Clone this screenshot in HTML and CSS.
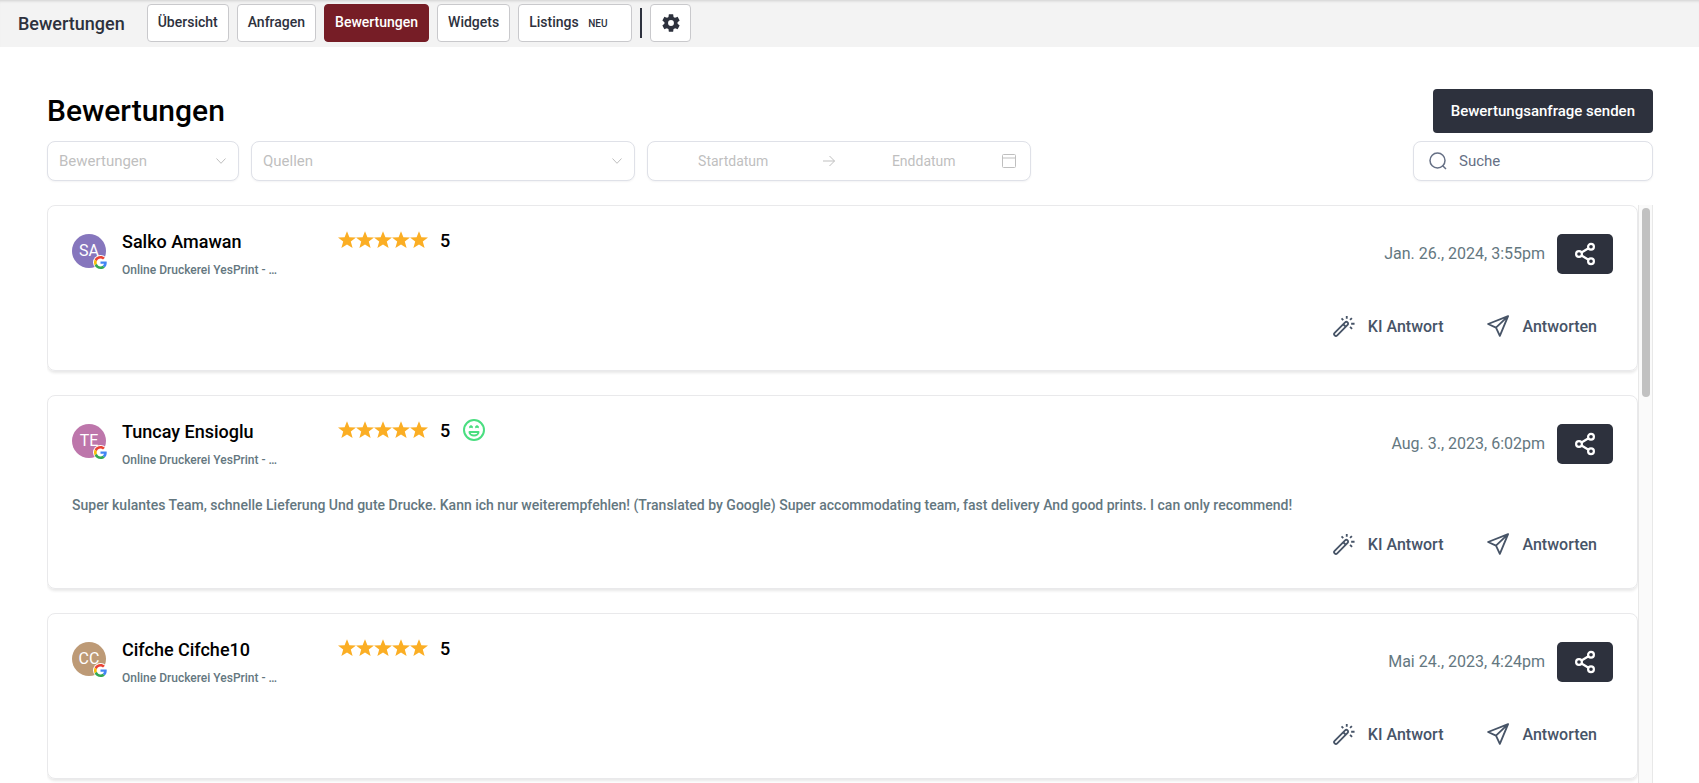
FILE: index.html
```html
<!DOCTYPE html>
<html lang="de">
<head>
<meta charset="utf-8">
<title>Bewertungen</title>
<link rel="stylesheet" href="styles.css">
</head>
<body>
<svg class="sprite" aria-hidden="true">
  <symbol id="star" viewBox="0 0 18 18"><path fill="#fbae24" d="M9 .2l2.400 6 6.600.3-5.200 4.100 1.800 6.400L9 13.500l-5.600 3.500 1.800-6.400L0 6.500l6.600-.3z"/></symbol>
  <symbol id="google" viewBox="0 0 48 48"><path fill="#EA4335" d="M24 9.5c3.54 0 6.71 1.22 9.21 3.6l6.85-6.85C35.9 2.38 30.47 0 24 0 14.62 0 6.51 5.38 2.56 13.22l7.98 6.19C12.43 13.72 17.74 9.5 24 9.5z"/><path fill="#4285F4" d="M46.98 24.55c0-1.57-.15-3.09-.38-4.55H24v9.02h12.94c-.58 2.96-2.26 5.48-4.78 7.18l7.73 6c4.51-4.18 7.09-10.36 7.09-17.65z"/><path fill="#FBBC05" d="M10.53 28.59c-.48-1.45-.76-2.99-.76-4.59s.27-3.14.76-4.59l-7.98-6.19C.92 16.46 0 20.12 0 24c0 3.88.92 7.54 2.56 10.78l7.97-6.19z"/><path fill="#34A853" d="M24 48c6.48 0 11.93-2.13 15.89-5.81l-7.73-6c-2.15 1.45-4.92 2.3-8.16 2.3-6.26 0-11.57-4.22-13.47-9.91l-7.98 6.19C6.51 42.62 14.62 48 24 48z"/></symbol>
  <symbol id="share" viewBox="0 0 24 24"><g fill="none" stroke="currentColor" stroke-width="2.200"><circle cx="18" cy="4.800" r="2.900"/><circle cx="6" cy="12" r="2.900"/><circle cx="18" cy="19.200" r="2.900"/><path d="M8.500 10.500l7-4.200M8.500 13.500l7 4.200"/></g></symbol>
  <symbol id="wand" viewBox="0 0 24 24"><g fill="none" stroke="currentColor" stroke-width="2"><path stroke-linejoin="round" d="M1.800 19.400L13.200 8.100a1.800 1.800 0 0 1 2.700 2.700L4.600 22.200a1.900 1.900 0 0 1-2.800-2.800zM11.200 10.100l2.700 2.700"/><path d="M15 1v3.200M9.300 3.600l1.900 1.900M20.600 3.400l-2 2M19.800 9.500H23.500M18.600 13l2.200 2.200"/></g></symbol>
  <symbol id="plane" viewBox="0 0 24 24"><path fill="none" stroke="currentColor" stroke-width="2" stroke-linejoin="round" d="M23 1.200L1.200 9.800 9.800 13.800 14 22.800zM23 1.200L9.800 13.800"/></symbol>
  <symbol id="chevron" viewBox="0 0 12 12"><path fill="none" stroke="currentColor" d="M1.500 3.500L6 8.300l4.500-4.800"/></symbol>
</svg>

<header class="topbar">
  <span class="topbar-title">Bewertungen</span>
  <nav class="tabs">
    <button class="tab">Übersicht</button>
    <button class="tab">Anfragen</button>
    <button class="tab tab-active">Bewertungen</button>
    <button class="tab">Widgets</button>
    <button class="tab tab-new">Listings <small class="tag">NEU</small></button>
    <span class="divider"></span>
    <button class="tab tab-gear" aria-label="Einstellungen"><svg width="22" height="22" viewBox="0 0 24 24"><path fill="currentColor" d="M19.140 12.940c.040-.300.060-.610.060-.940 0-.320-.020-.640-.070-.940l2.030-1.580c.180-.140.230-.410.120-.610l-1.920-3.320c-.120-.220-.370-.290-.590-.220l-2.390.960c-.500-.380-1.030-.700-1.620-.940l-.360-2.540c-.040-.240-.240-.410-.480-.410h-3.840c-.240 0-.430.170-.470.410l-.360 2.540c-.590.240-1.130.570-1.620.940l-2.390-.960c-.220-.080-.470 0-.590.220L2.740 8.870c-.120.210-.080.470.120.610l2.030 1.580c-.050.300-.090.630-.090.940s.020.640.070.940l-2.030 1.580c-.180.140-.230.410-.120.610l1.920 3.320c.120.220.370.290.590.220l2.390-.960c.500.380 1.030.700 1.620.940l.360 2.540c.050.240.240.410.480.410h3.840c.240 0 .440-.170.470-.410l.360-2.540c.590-.240 1.130-.560 1.620-.940l2.390.960c.220.080.470 0 .590-.220l1.920-3.320c.120-.220.070-.470-.120-.610l-2.010-1.580zM12 15.200a3.200 3.200 0 1 1 0-6.400 3.200 3.200 0 0 1 0 6.400z"/></svg></button>
  </nav>
</header>

<main class="page">
  <div class="page-head">
    <h1 class="page-title">Bewertungen</h1>
    <button class="send">Bewertungsanfrage senden</button>
  </div>
  <div class="filters">
    <div class="field field-rating">
      <select class="select" aria-label="Bewertungen"><option>Bewertungen</option></select>
      <svg class="caret" width="12" height="12"><use href="#chevron"/></svg>
    </div>
    <div class="field field-source">
      <select class="select" aria-label="Quellen"><option>Quellen</option></select>
      <svg class="caret" width="12" height="12"><use href="#chevron"/></svg>
    </div>
    <div class="field field-dates">
      <input class="date" type="text" placeholder="Startdatum" aria-label="Startdatum">
      <svg class="arrow" width="14" height="14" viewBox="0 0 14 14"><path fill="none" stroke="currentColor" d="M1 7h11.500M7.500 2l5 5-5 5"/></svg>
      <input class="date" type="text" placeholder="Enddatum" aria-label="Enddatum">
      <svg class="calendar" width="14" height="14" viewBox="0 0 14 14"><path fill="none" stroke="currentColor" d="M1.500.5h11a1 1 0 0 1 1 1v11a1 1 0 0 1-1 1h-11a1 1 0 0 1-1-1v-11a1 1 0 0 1 1-1zM.5 4h13"/></svg>
    </div>
    <label class="field field-search">
      <svg width="18" height="18" viewBox="0 0 18 18"><g fill="none" stroke="currentColor" stroke-width="1.500"><circle cx="8.500" cy="8.500" r="7.500"/><path d="M13.500 13.500l3.500 3.500"/></g></svg>
      <input class="search" type="text" placeholder="Suche" aria-label="Suche">
    </label>
  </div>

  <div class="list">
    <div class="cards">
      <article class="card">
        <div class="card-head">
          <div class="avatar avatar-violet">SA<span class="source"><svg width="13" height="13"><use href="#google"/></svg></span></div>
          <div class="who"><h2 class="name">Salko Amawan</h2><p class="place">Online Druckerei YesPrint - …</p></div>
          <div class="rating"><span class="stars"><svg><use href="#star"/></svg><svg><use href="#star"/></svg><svg><use href="#star"/></svg><svg><use href="#star"/></svg><svg><use href="#star"/></svg></span><span>5</span></div>
          <time class="when">Jan. 26., 2024, 3:55pm</time>
          <button class="share" aria-label="Teilen"><svg width="24" height="24"><use href="#share"/></svg></button>
        </div>
        <div class="actions">
          <button class="action"><svg width="22" height="22"><use href="#wand"/></svg>KI Antwort</button>
          <button class="action"><svg width="22" height="22"><use href="#plane"/></svg>Antworten</button>
        </div>
      </article>

      <article class="card">
        <div class="card-head">
          <div class="avatar avatar-pink">TE<span class="source"><svg width="13" height="13"><use href="#google"/></svg></span></div>
          <div class="who"><h2 class="name">Tuncay Ensioglu</h2><p class="place">Online Druckerei YesPrint - …</p></div>
          <div class="rating"><span class="stars"><svg><use href="#star"/></svg><svg><use href="#star"/></svg><svg><use href="#star"/></svg><svg><use href="#star"/></svg><svg><use href="#star"/></svg></span><span>5</span>
            <svg class="smiley" width="24" height="24" viewBox="0 0 24 24"><g fill="none" stroke="#4ade80" stroke-width="2"><circle cx="12" cy="12" r="10"/><path stroke-linejoin="round" d="M7.500 14h9c0 2-2 3.500-4.500 3.500S7.500 16 7.500 14z"/></g><path fill="#4ade80" d="M7.200 8.300L9 7l1.800 1.300v2L9 9.800l-1.800.5zM13.200 8.300L15 7l1.800 1.300v2L15 9.800l-1.800.5z"/></svg></div>
          <time class="when">Aug. 3., 2023, 6:02pm</time>
          <button class="share" aria-label="Teilen"><svg width="24" height="24"><use href="#share"/></svg></button>
        </div>
        <p class="text">Super kulantes Team, schnelle Lieferung Und gute Drucke. Kann ich nur weiterempfehlen! (Translated by Google) Super accommodating team, fast delivery And good prints. I can only recommend!</p>
        <div class="actions">
          <button class="action"><svg width="22" height="22"><use href="#wand"/></svg>KI Antwort</button>
          <button class="action"><svg width="22" height="22"><use href="#plane"/></svg>Antworten</button>
        </div>
      </article>

      <article class="card">
        <div class="card-head">
          <div class="avatar avatar-tan">CC<span class="source"><svg width="13" height="13"><use href="#google"/></svg></span></div>
          <div class="who"><h2 class="name">Cifche Cifche10</h2><p class="place">Online Druckerei YesPrint - …</p></div>
          <div class="rating"><span class="stars"><svg><use href="#star"/></svg><svg><use href="#star"/></svg><svg><use href="#star"/></svg><svg><use href="#star"/></svg><svg><use href="#star"/></svg></span><span>5</span></div>
          <time class="when">Mai 24., 2023, 4:24pm</time>
          <button class="share" aria-label="Teilen"><svg width="24" height="24"><use href="#share"/></svg></button>
        </div>
        <div class="actions">
          <button class="action"><svg width="22" height="22"><use href="#wand"/></svg>KI Antwort</button>
          <button class="action"><svg width="22" height="22"><use href="#plane"/></svg>Antworten</button>
        </div>
      </article>
    </div>
    <div class="track"><div class="thumb"></div></div>
  </div>
</main>
</body>
</html>
```
FILE: styles.css
```css
* { box-sizing: border-box; margin: 0; }

body {
  display: flex;
  flex-direction: column;
  height: 100vh;
  overflow: hidden;
  background: #fff;
  color: #000;
  font-family: Roboto, "Liberation Sans", sans-serif;
  font-size: 16px;
}

button, input, select { font: inherit; color: inherit; }
button { cursor: pointer; }
svg { display: block; flex: none; }
.sprite { position: absolute; width: 0; height: 0; }

.topbar {
  display: flex;
  align-items: center;
  gap: 22px;
  height: 47px;
  flex: none;
  padding: 0 18px 1px;
  background: #f3f3f3;
  box-shadow: inset 0 3px 3px -2px #d0d0d0;
  color: #2d313d;
}
.topbar-title { font-size: 18px; font-weight: 500; }

.tabs { display: flex; align-items: center; gap: 8px; }
.tab {
  height: 38px;
  padding: 0 10px 2px;
  border: 1px solid #c9c9cc;
  border-radius: 4px;
  background: #fff;
  font-size: 14px;
  font-weight: 500;
}
.tab-active { border-color: #761d26; background: #761d26; color: #fff; }
.tab-new { padding-right: 24px; }
.tag { margin-left: 6px; font-size: 10px; font-weight: 500; }
.divider { width: 2px; height: 30px; background: #2d313d; }
.tab-gear { display: grid; place-items: center; width: 41px; padding: 0; }

.page {
  display: flex;
  flex-direction: column;
  flex: 1;
  min-height: 0;
  padding: 42px 46px 0 47px;
}
.page-head { display: flex; justify-content: space-between; align-items: center; }
.page-title { padding-bottom: 2px; font-size: 30px; font-weight: 500; }
.send {
  height: 44px;
  padding: 0 18px;
  border: 0;
  border-radius: 4px;
  background: #2d313d;
  color: #fff;
  font-size: 15px;
  font-weight: 500;
}

.filters { display: flex; gap: 12px; margin-top: 8px; }
.field {
  position: relative;
  display: flex;
  align-items: center;
  min-width: 0;
  height: 40px;
  border: 1px solid #dfe1e8;
  border-radius: 8px;
  background: #fff;
  box-shadow: 0 1px 2px #1018280d;
  color: #bfbfbf;
}
.field-rating { flex: 0 1 192px; }
.field-source, .field-dates { flex: 0 1 384px; }
.field-dates { padding: 0 14px 0 11px; }
.field-search { flex: 0 1 240px; gap: 12px; margin-left: auto; padding-left: 15px; color: #667085; }
.select {
  width: 100%;
  height: 100%;
  padding: 0 32px 0 11px;
  border: 0;
  background: transparent;
  font-size: 15px;
  appearance: none;
}
.caret { position: absolute; right: 11px; pointer-events: none; }
.date, .search {
  flex: 1;
  min-width: 0;
  padding: 0;
  border: 0;
  outline: 0;
  background: transparent;
}
.date { font-size: 14px; text-align: center; }
.search { font-size: 15px; }
.date::placeholder, .search::placeholder { color: inherit; opacity: 1; }
.arrow { margin: 0 14px; }
.calendar { margin-left: 4px; }

.list { display: flex; flex: 1; min-height: 0; margin-top: 24px; }
.cards {
  display: flex;
  flex-direction: column;
  flex: 1;
  gap: 24px;
  min-width: 0;
  overflow: hidden;
}
.card {
  flex: none;
  padding: 28px 24px 24px;
  border: 1px solid #e9e9eb;
  border-radius: 8px;
  box-shadow: 0 2px 3px #00000018;
}
.card-head { display: flex; align-items: flex-start; height: 44px; }
.avatar {
  position: relative;
  width: 34px;
  border-radius: 50%;
  color: #fff;
  line-height: 34px;
  text-align: center;
}
.avatar-violet { background: #8676bd; }
.avatar-pink { background: #bd76ab; }
.avatar-tan { background: #bd9a76; }
.source {
  position: absolute;
  right: -2px;
  bottom: -2px;
  padding: 1px;
  border-radius: 50%;
  background: #fff;
}
.who { width: 232px; padding-left: 16px; }
.name { font-size: 18px; font-weight: 500; line-height: 16px; }
.place { margin-top: 12px; color: #64777f; font-size: 12px; font-weight: 500; line-height: 16px; white-space: nowrap; }
.rating {
  display: flex;
  align-items: center;
  gap: 12px;
  height: 12px;
  font-size: 18px;
  font-weight: 500;
}
.stars { display: flex; }
.stars svg { width: 18px; height: 18px; }
.when { margin-left: auto; color: #64777f; line-height: 40px; }
.share {
  display: grid;
  place-items: center;
  width: 56px;
  height: 40px;
  margin-left: 12px;
  padding: 0;
  border: 0;
  border-radius: 5px;
  background: #2d313d;
  color: #fff;
}
.text { margin-top: 27px; color: #64777f; font-size: 14px; font-weight: 500; line-height: 20px; }
.actions { display: flex; justify-content: flex-end; gap: 12px; margin-top: 28px; }
.text + .actions { margin-top: 9px; }
.action {
  display: flex;
  align-items: center;
  gap: 13px;
  height: 40px;
  padding: 0 16px;
  border: 0;
  background: transparent;
  color: #475467;
  font-weight: 500;
}

.track { width: 15px; padding: 3px 3px 0; border: solid #e8e8e8; border-width: 0 1px; background: #fafafa; }
.thumb { width: 8px; height: 189px; border-radius: 4px; background: #c1c1c1; }
```
